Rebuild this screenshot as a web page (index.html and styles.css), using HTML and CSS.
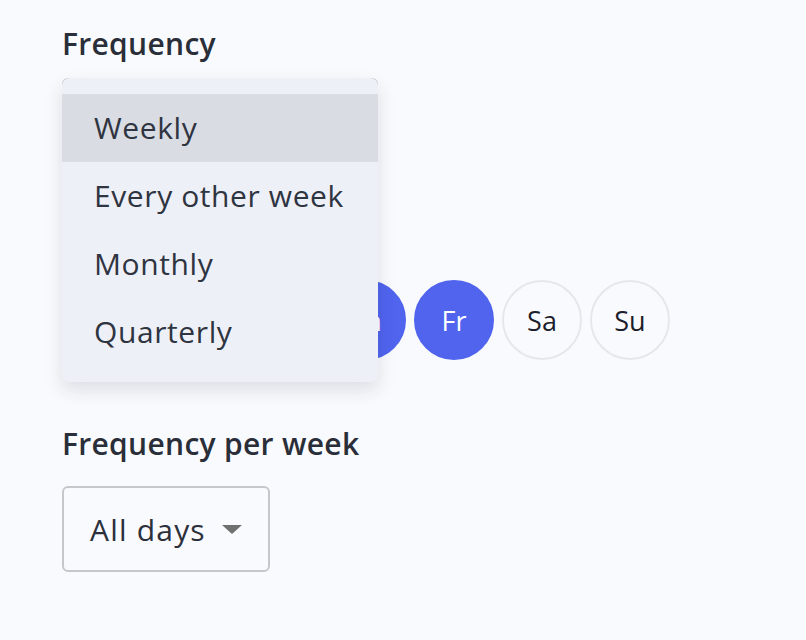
FILE: index.html
```html
<!DOCTYPE html>
<html lang="en">
<head>
<meta charset="utf-8">
<title>Frequency</title>
<link rel="stylesheet" href="styles.css">
</head>
<body>
<main class="form">
  <section class="field">
    <div class="label">Frequency</div>
    <div class="select-wrap">
      <div class="select select-wide">
        <span class="caret"></span>
      </div>
      <ul class="menu">
        <li class="menu-item is-active">Weekly</li>
        <li class="menu-item">Every other week</li>
        <li class="menu-item">Monthly</li>
        <li class="menu-item">Quarterly</li>
      </ul>
    </div>
    <div class="days">
      <span class="day is-on"></span>
      <span class="day is-on"></span>
      <span class="day is-on"></span>
      <span class="day is-on"><span class="day-text">Th</span></span>
      <span class="day is-on">Fr</span>
      <span class="day">Sa</span>
      <span class="day">Su</span>
    </div>
  </section>
  <section class="field field-week">
    <div class="label">Frequency per week</div>
    <div class="select">
      <span class="select-value">All days</span>
      <span class="caret"></span>
    </div>
  </section>
</main>
</body>
</html>
```
FILE: styles.css
```css
* { box-sizing: border-box; }
html, body { margin: 0; padding: 0; }
body {
  background: #f9fafd;
  font-family: "Open Sans", "Liberation Sans", sans-serif;
  color: #2c303b;
  width: 806px;
  height: 640px;
  overflow: hidden;
}
.form {
  padding: 24px 62px 0;
}
.label {
  font-size: 30px;
  line-height: 40px;
  font-weight: 600;
  color: #2a2e39;
  letter-spacing: 0.3px;
}
.select-wrap {
  position: relative;
  margin-top: 14px;
}
.select {
  display: inline-flex;
  align-items: center;
  gap: 16px;
  height: 86px;
  padding: 0 26px;
  border: 2px solid #c6c7ca;
  border-radius: 6px;
  font-size: 30px;
  color: #2c303b;
  letter-spacing: 1.2px;
}
.select-wide { width: 316px; justify-content: flex-end; }
.caret {
  width: 0;
  height: 0;
  border-left: 10px solid transparent;
  border-right: 10px solid transparent;
  border-top: 9px solid #707070;
}
.menu {
  position: absolute;
  top: 0;
  left: 0;
  width: 316px;
  margin: 0;
  padding: 16px 0;
  list-style: none;
  background: #eef0f8;
  border-radius: 8px;
  box-shadow: 0 8px 18px rgba(30, 35, 60, 0.13);
  z-index: 2;
}
.menu-item {
  height: 68px;
  line-height: 68px;
  padding: 0 32px;
  font-size: 30px;
  color: #2f3441;
  letter-spacing: 0.6px;
  white-space: nowrap;
}
.menu-item.is-active { background: #d9dce2; }
.days {
  display: flex;
  gap: 8px;
  margin-top: 116px;
}
.day {
  width: 80px;
  height: 80px;
  border-radius: 50%;
  border: 2px solid #e6e7eb;
  display: flex;
  align-items: center;
  justify-content: center;
  font-size: 27px;
  font-weight: 500;
  color: #1d202a;
}
.day.is-on {
  background: #5064ee;
  border-color: #5064ee;
  color: #ffffff;
}
.field-week { margin-top: 64px; }
.field-week .select { margin-top: 22px; width: 208px; }
```
